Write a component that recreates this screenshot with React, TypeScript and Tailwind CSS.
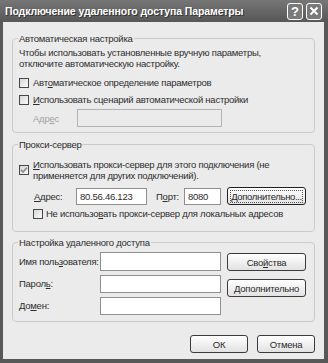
import type { ReactNode } from 'react';

const U = ({ children }: { children: ReactNode }) => (
  <span className="underline underline-offset-[1px]">{children}</span>
);

const Checkbox = ({ checked }: { checked?: boolean }) => (
  <span className="flex h-[10px] w-[10px] shrink-0 items-center justify-center border border-[#474747] bg-linear-to-br from-[#d6d6d6] to-[#fbfbfb]">
    {checked && (
      <svg width="8" height="8" viewBox="0 0 8 8">
        <path d="M1 3.8 L3 6 L7 1.6" stroke="#8c8c8c" strokeWidth="1.6" fill="none" />
      </svg>
    )}
  </span>
);

const Btn = ({ children, className = '' }: { children: ReactNode; className?: string }) => (
  <div
    className={`flex h-[18px] items-center justify-center rounded-[3px] border border-[#3b3b3b] bg-linear-to-b from-white to-[#e2e2e2] text-[#2b2b2b] ${className}`}
  >
    <span className="whitespace-nowrap">{children}</span>
  </div>
);

const Field = ({ className = '' }: { className?: string }) => (
  <div className={`h-[18px] border border-[#8f8f8f] bg-white ${className}`} />
);

const Label = ({ children }: { children: ReactNode }) => (
  <span className="flex h-[19px] items-center whitespace-nowrap">
    <span>{children}</span>
  </span>
);

export default function App() {
  return (
    <div className="flex h-[363px] w-[328px] flex-col overflow-hidden bg-[#585858] font-['Liberation_Sans',Arial,sans-serif] text-[9.5px] leading-[11px] tracking-[-0.25px] text-[#2d2d2d]">
      {/* title bar */}
      <div className="flex h-[22px] shrink-0 items-center bg-linear-to-b from-[#767676] to-[#575757] pl-[5px] pr-[6px]">
        <span className="text-[10.5px] font-bold tracking-[-0.1px] text-white [text-shadow:1px_1px_0_#333]">
          Подключение удаленного доступа Параметры
        </span>
        <div className="ml-auto flex gap-[3px]">
          <div className="flex h-[17px] w-[16px] items-center justify-center rounded-[3px] border border-white bg-[#7a7a7a] text-[13px] font-bold tracking-normal text-white">
            ?
          </div>
          <div className="flex h-[17px] w-[16px] items-center justify-center rounded-[3px] border border-white bg-[#7a7a7a]">
            <svg width="10" height="10" viewBox="0 0 10 10">
              <path d="M1.5 1.5 L8.5 8.5 M8.5 1.5 L1.5 8.5" stroke="white" strokeWidth="2" />
            </svg>
          </div>
        </div>
      </div>

      {/* body */}
      <div className="mb-[4px] ml-[3px] mr-[4px] flex flex-1 flex-col bg-[#ebebeb] px-[9px] pt-[11px]">
        <fieldset className="min-w-0 rounded-[4px] border border-[#cbcbcb] pb-[4px] pl-[6px] pr-[8px]">
          <legend className="ml-[-1px] px-[1px]">Автоматическая настройка</legend>
          <div className="pt-[3px]">
            Чтобы использовать установленные вручную параметры,
            <br />
            отключите автоматическую настройку.
          </div>
          <div className="mt-[5px] flex h-[17px] items-center gap-[4px]">
            <Checkbox />
            <span>
              Авт<U>о</U>матическое определение параметров
            </span>
          </div>
          <div className="flex h-[17px] items-center gap-[4px]">
            <Checkbox />
            <span>
              <U>И</U>спользовать сценарий автоматической настройки
            </span>
          </div>
          <div className="flex h-[20px] items-center">
            <span className="w-[58px] pl-[14px] text-[#a2a2a2]">
              Адр<U>е</U>с
            </span>
            <div className="h-[18px] w-[145px] border border-[#b3b3b3] bg-[#ebebeb]" />
          </div>
        </fieldset>

        <fieldset className="mt-[6px] min-w-0 rounded-[4px] border border-[#cbcbcb] pb-[9px] pl-[6px] pr-[8px]">
          <legend className="ml-[-1px] px-[1px]">Прокси-сервер</legend>
          <div className="flex items-start gap-[4px] pt-[9px]">
            <span className="mt-[6px]">
              <Checkbox checked />
            </span>
            <span>
              <U>И</U>спользовать прокси-сервер для этого подключения (не
              <br />
              применяется для других подключений).
            </span>
          </div>
          <div className="mt-[6px] flex h-[18px] items-center">
            <span className="w-[57px] whitespace-nowrap pl-[15px]">
              <U>А</U>дрес:
            </span>
            <div className="flex h-[17px] w-[71px] items-center border border-[#8f8f8f] bg-white pl-[3px]">80.56.46.123</div>
            <span className="w-[37px] whitespace-nowrap pl-[9px]">
              П<U>о</U>рт:
            </span>
            <div className="flex h-[17px] w-[37px] items-center border border-[#8f8f8f] bg-white pl-[3px]">8080</div>
            <Btn className="ml-[6px] w-[79px] border-[#222]">
              <span className="border border-dotted border-[#555] leading-[10px] tracking-[-0.35px]">
                <U>Д</U>ополнительно...
              </span>
            </Btn>
          </div>
          <div className="flex h-[17px] items-center gap-[3px] pl-[14px]">
            <Checkbox />
            <span className="whitespace-nowrap">
              Не использо<U>в</U>ать прокси-сервер для локальных адресов
            </span>
          </div>
        </fieldset>

        <fieldset className="mt-[5px] min-w-0 rounded-[4px] border border-[#cbcbcb] pb-[6px] pl-[6px] pr-[8px]">
          <legend className="ml-[-1px] px-[1px]">
            Настройка удаленного <U>д</U>оступа
          </legend>
          <div className="mt-[4px] flex">
            <div className="grid grid-cols-[81px_121px] gap-y-[3px]">
              <Label>
                Имя поль<U>з</U>ователя:
              </Label>
              <Field className="h-[19px]" />
              <Label>
                Парол<U>ь</U>:
              </Label>
              <Field className="mt-[1px]" />
              <Label>
                До<U>м</U>ен:
              </Label>
              <Field className="mt-[1px]" />
            </div>
            <div className="ml-[6px] flex flex-col">
              <Btn className="mt-[1px] w-[79px]">
                Сво<U>й</U>ства
              </Btn>
              <Btn className="mt-[8px] w-[79px]">
                <U>Д</U>ополнительно
              </Btn>
            </div>
          </div>
        </fieldset>

        <div className="mt-[13px] flex justify-end gap-[9px]">
          <Btn className="w-[58px]">ОК</Btn>
          <Btn className="w-[58px]">Отмена</Btn>
        </div>
      </div>
    </div>
  );
}
